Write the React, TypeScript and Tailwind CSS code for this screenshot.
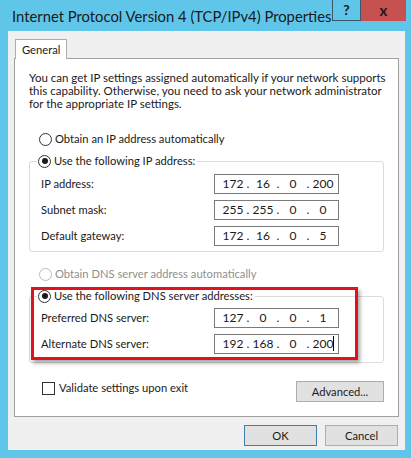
import React from 'react'

type Ip = [string, string, string, string]

function Radio({ checked, disabled }: { checked?: boolean; disabled?: boolean }) {
  return (
    <span
      className={`flex h-[13px] w-[13px] shrink-0 items-center justify-center rounded-full border bg-white ${
        disabled ? 'border-[#bcbcbc]' : 'border-[#333333]'
      }`}
    >
      {checked && <span className="h-[6px] w-[6px] rounded-full bg-[#1a1a1a]" />}
    </span>
  )
}

function IpBox({ value, cursor }: { value: Ip; cursor?: boolean }) {
  return (
    <div className="flex h-[20px] w-[125px] items-center border border-[#7a7a7a] bg-white pl-[7px] text-[12px] text-[#1a1a1a]">
      {value.map((part, i) => (
        <React.Fragment key={i}>
          {i > 0 && <span className="w-[8px] text-center">.</span>}
          <span className="relative w-[22px] text-center">
            {part}
            {cursor && i === 3 && <span className="absolute right-[0px] top-[-1px] h-[15px] w-px bg-black" />}
          </span>
        </React.Fragment>
      ))}
    </div>
  )
}

function Row({ label, value, cursor }: { label: string; value: Ip; cursor?: boolean }) {
  return (
    <div className="flex h-[20px] items-center justify-between pl-[11px] pr-[44px]">
      <span>{label}</span>
      <IpBox value={value} cursor={cursor} />
    </div>
  )
}

export default function App() {
  return (
    <div className="relative h-[458px] w-[411px] overflow-hidden bg-[#5fc6ea] font-['Lato','Noto_Sans',sans-serif] text-[11.2px] leading-[14px] text-[#1a1a1a]">
      {/* title bar */}
      <div className="flex h-[31px] items-start justify-between">
        <div className="whitespace-nowrap pl-[12px] pt-[6px] text-[14.8px] leading-[20px] text-[#1a1a1a]">
          Internet Protocol Version 4 (TCP/IPv4) Properties
        </div>
        <div className="mr-[5px] flex">
          <div className="flex h-[21px] w-[29px] items-center justify-center border border-t-0 border-[#3a5a6a] bg-[#5fc6ea] text-[14px] font-bold">
            ?
          </div>
          <div className="flex h-[21px] w-[45px] items-center justify-center bg-[#c75050] text-[15px] font-bold leading-none text-[#1a1a1a]">
            x
          </div>
        </div>
      </div>

      {/* client area */}
      <div className="ml-[8px] mr-[6px] flex h-[419px] flex-col bg-[#f0f0f0] px-[6px] pt-[8px]">
        <div className="relative z-10 -mb-px ml-px flex h-[20px] w-[52px] items-center border border-b-0 border-[#adadad] bg-white pl-[6px]">
          General
        </div>
        <div className="flex h-[359px] flex-col border border-[#a0a0a0] bg-white pl-[14px] pr-[14px] pt-[12px]">
          <p className="whitespace-nowrap text-[11.5px] leading-[13px]">
            You can get IP settings assigned automatically if your network supports
            <br />
            this capability. Otherwise, you need to ask your network administrator
            <br />
            for the appropriate IP settings.
          </p>

          <div className="mt-[22px] flex items-center gap-[3px] pl-[10px]">
            <Radio />
            <span>Obtain an IP address automatically</span>
          </div>

          <fieldset className="mt-[8px] rounded-[3px] border border-[#dcdcdc] pb-[5px] pt-[6px]">
            <legend className="ml-[7px] flex items-center gap-[3px] bg-white pl-px pr-[2px]">
              <Radio checked />
              <span>Use the following IP address:</span>
            </legend>
            <div className="flex flex-col gap-[6px]">
              <Row label="IP address:" value={['172', '16', '0', '200']} />
              <Row label="Subnet mask:" value={['255', '255', '0', '0']} />
              <Row label="Default gateway:" value={['172', '16', '0', '5']} />
            </div>
          </fieldset>

          <div className="mt-[15px] flex items-center gap-[3px] pl-[10px] text-[#8f8f8f]">
            <Radio disabled />
            <span>Obtain DNS server address automatically</span>
          </div>

          <fieldset className="mt-[8px] rounded-[3px] border border-[#dcdcdc] pb-[8px] pt-[5px]">
            <legend className="ml-[7px] flex items-center gap-[3px] bg-white pl-px pr-[2px]">
              <Radio checked />
              <span>Use the following DNS server addresses:</span>
            </legend>
            <div className="flex flex-col gap-[6px]">
              <Row label="Preferred DNS server:" value={['127', '0', '0', '1']} />
              <Row label="Alternate DNS server:" value={['192', '168', '0', '200']} cursor />
            </div>
          </fieldset>

          <div className="mt-[18px] flex items-start justify-between pl-[13px] pr-[0px]">
            <div className="flex items-center gap-[4px]">
              <span className="h-[13px] w-[13px] border border-[#333333] bg-white" />
              <span>Validate settings upon exit</span>
            </div>
            <button className="h-[21px] w-[88px] border border-[#adadad] bg-[#e1e1e1] text-center">
              Advanced...
            </button>
          </div>
        </div>

        <div className="mt-[8px] flex justify-end gap-[8px] pr-[1px]">
          <button className="h-[21px] w-[73px] border border-[#3c7fb1] bg-[#e1e1e1]">OK</button>
          <button className="h-[21px] w-[73px] border border-[#adadad] bg-[#e1e1e1]">Cancel</button>
        </div>
      </div>

      {/* red annotation box */}
      <div className="absolute left-[31px] top-[287px] h-[73px] w-[327px] border-[3px] border-[#e1121b] shadow-[2px_3px_4px_rgba(0,0,0,0.35)]" />
    </div>
  )
}
